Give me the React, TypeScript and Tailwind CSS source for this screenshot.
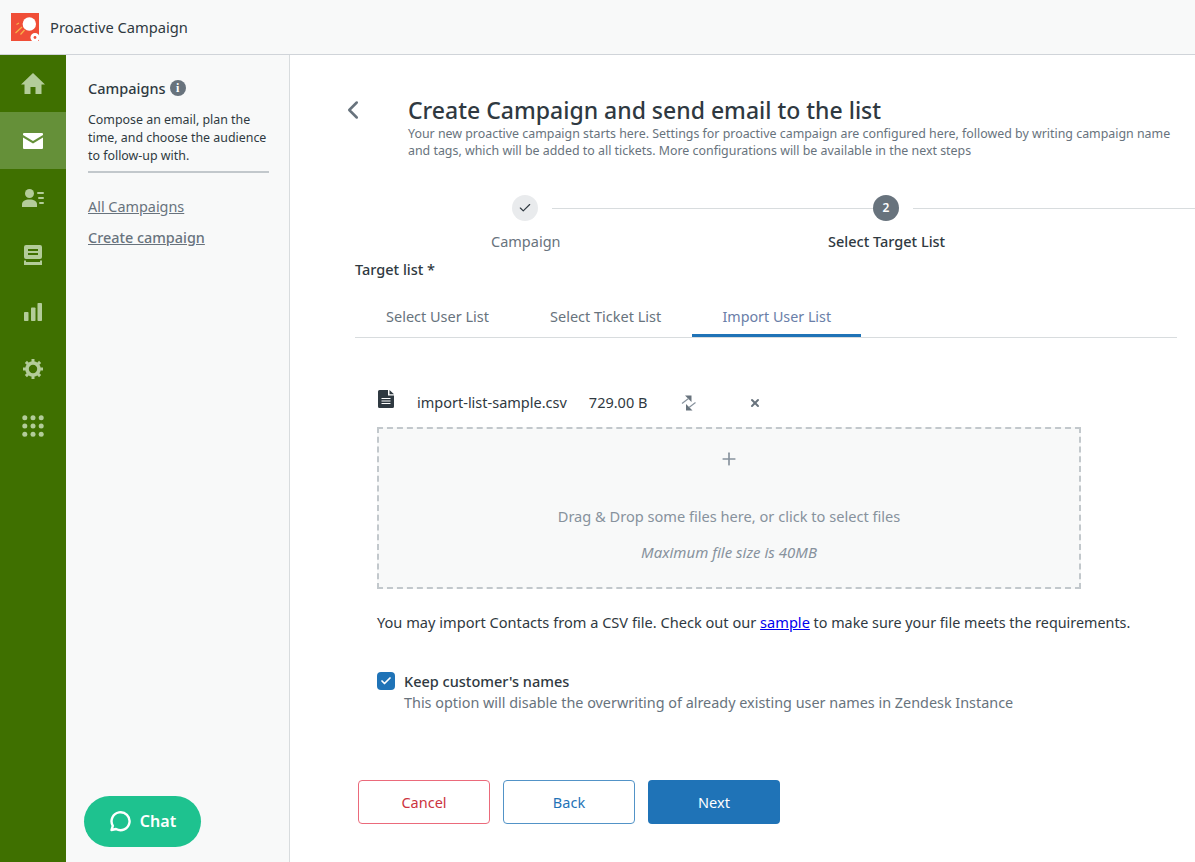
import { Check, ChevronLeft, Plus, X } from "lucide-react"

function NavItem({ active, children }: { active?: boolean; children: React.ReactNode }) {
  return (
    <div className={`flex h-[57px] items-center justify-center ${active ? "bg-[#659039] text-white" : "text-[#b3cc99]"}`}>
      {children}
    </div>
  )
}

function HomeIcon() {
  return (
    <svg width="24" height="22" viewBox="0 0 24 22" fill="currentColor">
      <path d="M12 0 L24 11.5 L20.5 11.5 L20.5 21 L14.5 21 L14.5 14 L9.5 14 L9.5 21 L3.5 21 L3.5 11.5 L0 11.5 Z" />
    </svg>
  )
}

function MailIcon() {
  return (
    <svg width="20" height="16" viewBox="0 0 20 16" fill="currentColor">
      <path d="M1 0 H19 Q20 0 20 1 V2 L10 8 L0 2 V1 Q0 0 1 0 Z" />
      <path d="M0 4.5 L10 10.5 L20 4.5 V15 Q20 16 19 16 H1 Q0 16 0 15 Z" />
    </svg>
  )
}

function ContactsIcon() {
  return (
    <svg width="22" height="18" viewBox="0 0 22 18" fill="currentColor">
      <circle cx="7.5" cy="4.5" r="4.5" />
      <path d="M0 18 V15.5 C0 12 3 10.5 7.5 10.5 C12 10.5 15 12 15 15.5 V18 Z" />
      <rect x="15" y="3" width="7" height="2" rx="1" />
      <rect x="16" y="8" width="6" height="2" rx="1" />
      <rect x="17" y="13" width="5" height="2" rx="1" />
    </svg>
  )
}

function ArchiveIcon() {
  return (
    <svg width="18" height="20" viewBox="0 0 18 20" fill="currentColor">
      <path fillRule="evenodd" d="M2 0 H16 Q18 0 18 2 V12 Q18 14 16 14 H2 Q0 14 0 12 V2 Q0 0 2 0 Z M4 4 V6 H14 V4 Z M4 8 V10 H14 V8 Z" />
      <path d="M0 15.5 H2 V17 H16 V15.5 H18 V20 H0 Z" />
    </svg>
  )
}

function ChartIcon() {
  return (
    <svg width="18" height="18" viewBox="0 0 18 18" fill="currentColor">
      <rect x="0" y="9" width="4.5" height="9" rx="0.8" />
      <rect x="7" y="4.5" width="4.5" height="13.5" rx="0.8" />
      <rect x="13.5" y="0" width="4.5" height="18" rx="0.8" />
    </svg>
  )
}

function GearIcon() {
  return (
    <svg width="20" height="20" viewBox="0 0 20 20">
      <circle cx="10" cy="10" r="6" fill="none" stroke="currentColor" strokeWidth="3.6" />
      <g stroke="currentColor" strokeWidth="3">
        <path d="M10 0 V3" />
        <path d="M10 17 V20" />
        <path d="M0 10 H3" />
        <path d="M17 10 H20" />
        <path d="M2.9 2.9 L5 5" />
        <path d="M15 15 L17.1 17.1" />
        <path d="M2.9 17.1 L5 15" />
        <path d="M15 5 L17.1 2.9" />
      </g>
    </svg>
  )
}

function GridIcon() {
  const dots = [2.5, 10.7, 18.9]
  return (
    <svg width="22" height="22" viewBox="0 0 22 22" fill="currentColor">
      {dots.map((y) => dots.map((x) => <circle key={`${x}-${y}`} cx={x + 0.3} cy={y + 0.3} r="2.5" />))}
    </svg>
  )
}

function Logo() {
  return (
    <svg width="28" height="28" viewBox="0 0 28 28">
      <rect width="28" height="28" fill="#f04e37" />
      <circle cx="18.3" cy="11" r="6.7" fill="#fff" />
      <path d="M5.5 11.5 L8 10 M4.5 20 L11 14 M9.5 21.5 L13.5 17" stroke="#f8b44a" strokeWidth="1.2" />
      <circle cx="24" cy="24.5" r="4.5" fill="#fff" />
      <circle cx="24" cy="24.5" r="1.4" fill="#f04e37" />
    </svg>
  )
}

function DocIcon() {
  return (
    <svg width="16" height="18" viewBox="0 0 16 18">
      <path d="M1.5 0 H10 V5.5 H16 V16.5 Q16 18 14.5 18 H1.5 Q0 18 0 16.5 V1.5 Q0 0 1.5 0 Z" fill="#2f3941" />
      <path d="M11.5 0 L16 4.2 H11.5 Z" fill="#2f3941" />
      <path d="M3.5 8.5 H12.5 M3.5 11 H12.5 M3.5 13.5 H12.5" stroke="#fff" strokeWidth="1.1" />
    </svg>
  )
}

function SwapIcon() {
  return (
    <svg width="15" height="16" viewBox="0 0 15 16" fill="#68737d">
      <path d="M4 0.5 H10.5 V7 Z" />
      <path d="M7.5 3.5 L1 8.5" stroke="#87929d" strokeWidth="1.2" />
      <path d="M5 9 V15.5 H11.5 Z" />
      <path d="M8 12.5 L14.5 7.5" stroke="#87929d" strokeWidth="1.2" />
    </svg>
  )
}

function Tab({ label, active }: { label: string; active?: boolean }) {
  return (
    <div
      className={`flex h-[38px] items-start justify-center pt-[7px] ${
        active ? "w-[169px] border-b-[3px] border-[#1f73b7] text-[14.3px] text-[#6a7ea8]" : "text-[#68737d]"
      }`}
    >
      {label}
    </div>
  )
}

export default function App() {
  return (
    <div className="flex h-[862px] w-[1195px] flex-col overflow-hidden bg-white font-['Noto_Sans','Open_Sans',sans-serif] text-[14.5px] text-[#2f3941]">
      <header className="flex h-[55px] shrink-0 items-center border-b border-[#d0d4d9] bg-[#f8f9f9] pl-[11px]">
        <Logo />
        <span className="ml-[11px] text-[14.7px] text-[#2f3941]">Proactive Campaign</span>
      </header>

      <div className="flex min-h-0 flex-1">
        <nav className="flex w-[66px] shrink-0 flex-col bg-[#3f7000]">
          <NavItem><HomeIcon /></NavItem>
          <NavItem active><MailIcon /></NavItem>
          <NavItem><ContactsIcon /></NavItem>
          <NavItem><ArchiveIcon /></NavItem>
          <NavItem><ChartIcon /></NavItem>
          <NavItem><GearIcon /></NavItem>
          <NavItem><GridIcon /></NavItem>
        </nav>

        <aside className="relative flex w-[224px] shrink-0 flex-col border-r border-[#d8dcde] bg-[#f8f9f9] pl-[22px] pr-[20px] pt-[23px]">
          <div className="flex items-center gap-[4px] text-[14.5px] font-medium leading-[20px] text-[#2f3941]">
            Campaigns
            <span className="flex h-[16px] w-[16px] items-center justify-center rounded-full bg-[#68737d] font-['Liberation_Serif',serif] text-[12px] font-bold text-white">
              i
            </span>
          </div>
          <p className="mt-[13px] border-b-2 border-[#c2c8cc] pb-[6px] text-[12.4px] leading-[18px] text-[#2f3941]">
            Compose an email, plan the time, and choose the audience to follow-up with.
          </p>
          <a className="mt-[24px] text-[14.4px] leading-[20px] text-[#68737d] underline">All Campaigns</a>
          <a className="mt-[11px] text-[14.4px] font-medium leading-[20px] text-[#68737d] underline">Create campaign</a>
          <div className="absolute bottom-[15px] left-[18px] flex h-[51px] w-[117px] items-center justify-center gap-[9px] rounded-full bg-[#1ec28f] pb-px text-[16px] font-semibold text-white">
            <svg width="22" height="22" viewBox="0 0 22 22" fill="none" stroke="#fff" strokeWidth="2.4">
              <path d="M2.5 20 L3.8 15.8 A9 9 0 1 1 7 19 Z" strokeLinejoin="round" />
            </svg>
            Chat
          </div>
        </aside>

        <main className="min-w-0 flex-1 overflow-hidden pl-[65px] pr-[18px] pt-[40px]">
          <div className="flex">
            <div className="w-[53px] shrink-0 text-[#68737d]">
              <ChevronLeft size={30} strokeWidth={2} className="-ml-[17px]" />
            </div>
            <div className="min-w-0">
              <h1 className="text-[23px] font-medium leading-[30px] text-[#2f3941]">Create Campaign and send email to the list</h1>
              <p className="text-[12.4px] leading-[17px] text-[#68737d]">
                Your new proactive campaign starts here. Settings for proactive campaign are configured here, followed by writing campaign name and tags, which will be added to all tickets. More configurations will be available in the next steps
              </p>
            </div>
          </div>

          <div className="-mr-[18px] mt-[36px] flex">
            <div className="ml-[157px] flex w-[361px] shrink-0 flex-col">
              <div className="flex items-center">
                <span className="flex h-[26px] w-[26px] items-center justify-center rounded-full bg-[#e9ebed] text-[#2f3941]">
                  <Check size={14} strokeWidth={2} />
                </span>
                <span className="ml-[14px] h-px flex-1 bg-[#d8dcde]" />
              </div>
              <span className="mt-[10px] w-[26px] whitespace-nowrap leading-[20px] text-[#68737d]">
                <span className="-ml-[21px] block">Campaign</span>
              </span>
            </div>
            <div className="flex flex-1 flex-col">
              <div className="flex items-center">
                <span className="flex h-[26px] w-[26px] items-center justify-center rounded-full bg-[#68737d] text-[12px] font-semibold text-white">
                  2
                </span>
                <span className="ml-[14px] h-px flex-1 bg-[#d8dcde]" />
              </div>
              <span className="mt-[10px] -ml-[45px] whitespace-nowrap font-medium leading-[20px] text-[#2f3941]">Select Target List</span>
            </div>
          </div>

          <div className="mt-[8px] font-medium leading-[20px] text-[#2f3941]">Target list *</div>

          <div className="mt-[20px] flex border-b border-[#d8dcde]">
            <div className="ml-[31px]"><Tab label="Select User List" /></div>
            <div className="ml-[61px]"><Tab label="Select Ticket List" /></div>
            <div className="ml-[31px]"><Tab label="Import User List" active /></div>
          </div>

          <div className="ml-[22px] w-[704px]">
            <div className="mt-[51px] flex h-[27px] items-center text-[#2f3941]">
              <span className="-mt-[7px] ml-[1px]"><DocIcon /></span>
              <span className="ml-[23px]">import-list-sample.csv</span>
              <span className="ml-[22px]">729.00 B</span>
              <span className="ml-[34px]"><SwapIcon /></span>
              <X size={12} strokeWidth={4} className="ml-[53px] text-[#68737d]" />
            </div>
            <div className="mt-[11px] flex h-[162px] flex-col items-center border-2 border-dashed border-[#c2c8cc] bg-[#f8f9f9] text-[#87929d]">
              <Plus size={20} strokeWidth={2} className="mt-[20px]" />
              <div className="mt-[37px] text-[14.6px] leading-[20px]">Drag &amp; Drop some files here, or click to select files</div>
              <div className="mt-[16px] text-[15px] italic leading-[20px]">Maximum file size is 40MB</div>
            </div>
          </div>

          <p className="ml-[22px] mt-[23px] whitespace-nowrap text-[14.6px] leading-[20px] text-[#2f3941]">
            You may import Contacts from a CSV file. Check out our <a className="text-[#0000ee] underline">sample</a>
            <span className="text-[14.35px]"> to make sure your file meets the requirements.</span>
          </p>

          <div className="ml-[22px] mt-[38px] flex gap-[9px]">
            <span className="mt-[1px] flex h-[18px] w-[18px] items-center justify-center rounded-[4px] bg-[#1f73b7] text-white">
              <Check size={12} strokeWidth={3.5} />
            </span>
            <div>
              <div className="font-medium leading-[20px] text-[#2f3941]">Keep customer's names</div>
              <div className="mt-[2px] text-[14.4px] leading-[20px] text-[#68737d]">This option will disable the overwriting of already existing user names in Zendesk Instance</div>
            </div>
          </div>

          <div className="ml-[3px] mt-[67px] flex gap-[13px]">
            <button className="h-[44px] w-[132px] rounded-[4px] border border-[#eb6a7b] pt-px text-[#cc3340]">Cancel</button>
            <button className="h-[44px] w-[132px] rounded-[4px] border border-[#5293c7] pt-px text-[#1f73b7]">Back</button>
            <button className="h-[44px] w-[132px] rounded-[4px] bg-[#1f73b7] pt-px text-white">Next</button>
          </div>
        </main>
      </div>
    </div>
  )
}
